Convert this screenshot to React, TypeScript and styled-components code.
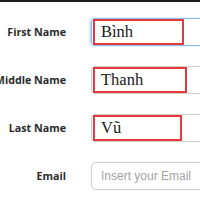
import React from "react";
import styled, { createGlobalStyle } from "styled-components";

const Global = createGlobalStyle`
  html, body { margin: 0; padding: 0; background: #fff; }
  body { overflow: hidden; width: 200px; height: 200px; }
`;

const Page = styled.div`
  border-top: 2px solid #1e1e1e;
  padding-top: 16px;
  display: flex;
  flex-direction: column;
  gap: 20px;
  width: 200px;
  overflow: hidden;
`;

const Row = styled.div`
  display: flex;
  align-items: center;
  height: 28px;
`;

const Label = styled.label`
  flex: none;
  width: 66px;
  display: flex;
  justify-content: flex-end;
  white-space: nowrap;
  font-family: "Open Sans", "Liberation Sans", sans-serif;
  font-weight: 700;
  font-size: 10.7px;
  color: #2b2b2b;
`;

const Field = styled.div<{ $focus?: boolean }>`
  flex: none;
  margin-left: 25px;
  width: 150px;
  height: 28px;
  box-sizing: border-box;
  border: 1px solid ${(p) => (p.$focus ? "#8cc0ec" : "#cfcfcf")};
  border-radius: 4px;
  box-shadow: ${(p) => (p.$focus ? "-1px 0 2px rgba(102,175,233,0.6)" : "none")};
  display: flex;
  align-items: center;
  padding: 0 1px;
`;

const Mark = styled.span<{ $w: number }>`
  box-sizing: border-box;
  width: ${(p) => p.$w}px;
  height: 26px;
  border: 2px solid #e5393b;
  display: flex;
  align-items: center;
  padding-left: 6px;
  font-family: "Liberation Serif", serif;
  font-size: 16.5px;
  color: #1a1a1a;
`;

const Placeholder = styled.span`
  padding-left: 8px;
  font-family: "Liberation Sans", Arial, sans-serif;
  font-size: 12px;
  color: #a3a3a3;
`;

export default function App() {
  return (
    <>
      <Global />
      <Page>
        <Row>
          <Label>First Name</Label>
          <Field $focus>
            <Mark $w={91}>Bình</Mark>
          </Field>
        </Row>
        <Row>
          <Label>Middle Name</Label>
          <Field>
            <Mark $w={94}>Thanh</Mark>
          </Field>
        </Row>
        <Row>
          <Label>Last Name</Label>
          <Field>
            <Mark $w={89}>Vũ</Mark>
          </Field>
        </Row>
        <Row>
          <Label>Email</Label>
          <Field>
            <Placeholder>Insert your Email</Placeholder>
          </Field>
        </Row>
      </Page>
    </>
  );
}
